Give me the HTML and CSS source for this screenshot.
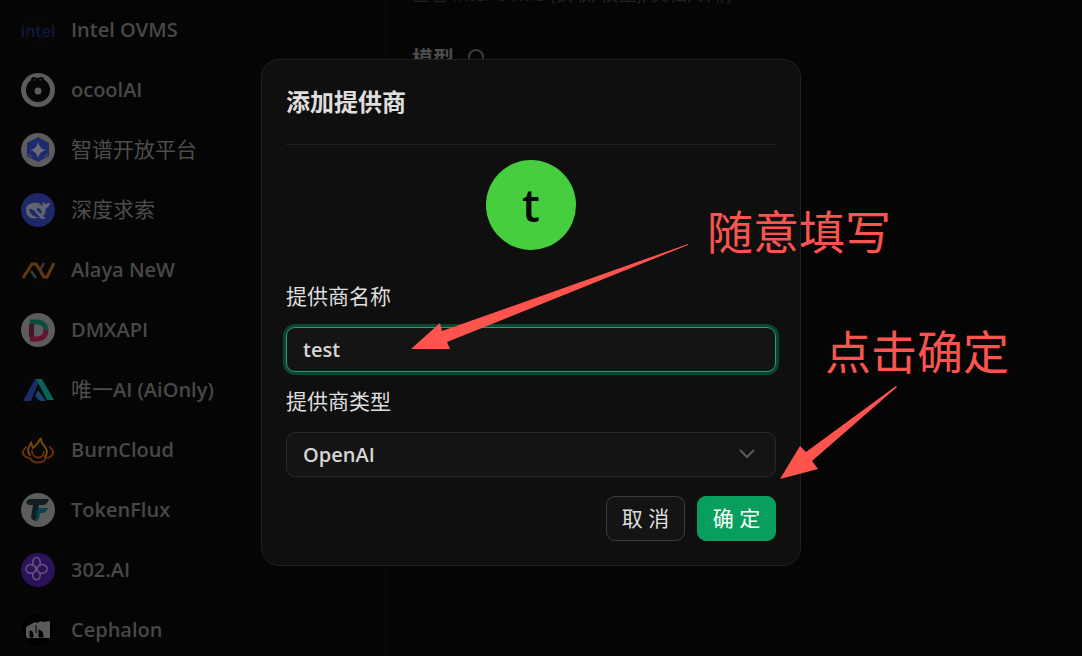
FILE: index.html
```html
<!DOCTYPE html>
<html lang="zh-CN">
<head>
    <meta charset="UTF-8">
    <meta name="viewport" content="width=device-width, initial-scale=1.0">
    <title>添加提供商</title>
    <link rel="stylesheet" href="styles.css">
</head>
<body>
    <div class="page">
        <ul class="providers">
            <li>
                <svg class="logo" viewBox="0 0 36 36"><circle cx="18" cy="18" r="17.5" fill="#060606" stroke="#0a0a0a"/><text class="intel" x="18" y="25" text-anchor="middle">intel</text></svg>
                <b>Intel OVMS</b>
            </li>
            <li>
                <svg class="logo" viewBox="0 0 36 36"><circle cx="18" cy="18" r="17" fill="#5c5c5c"/><circle cx="18" cy="18" r="12" fill="#060606"/><circle cx="14" cy="8" r="3" fill="#060606"/><circle cx="21" cy="8" r="3" fill="#060606"/><circle cx="14.5" cy="8" r="1" fill="#333"/><circle cx="20.5" cy="8" r="1" fill="#333"/><circle cx="18" cy="19" r="3.5" fill="#5c5c5c"/></svg>
                <b>ocoolAI</b>
            </li>
            <li>
                <svg class="logo" viewBox="0 0 36 36"><circle cx="18" cy="18" r="17" fill="#5c5c5c"/><path d="M18 5l11 6v13L18 30 7 24V11z" fill="#1f2b6c"/><path d="M18 10q1.500 7 8 8-6.500 1.500-8 8-1.500-6.500-8-8 6.500-1 8-8z" fill="#6a6c78"/><path d="M8 22l4 3M28 22l-4 3" stroke="#5c5c5c"/></svg>
                <span>智谱开放平台</span>
            </li>
            <li>
                <svg class="logo" viewBox="0 0 36 36"><circle cx="18" cy="18" r="17" fill="#1e2869"/><path d="M6 18c0-6 6-8 12-7 2 0 3 2 4.500 3.500.5-2-.5-3 .5-5 1 2 2 2.500 3.500 2.500 1-1 2-1.500 3.500-1-.5 3-2 4.500-4 5 0 4-1.500 6.500-3 8l2.500 2.500c-3 1-5 0-7-1.500C12 29 6 24 6 18z" fill="#62646e"/><path d="M9 17c5-1 8 6 11 8-6 1-10-3-11-8z" fill="#1e2869"/><path d="M17 16c3 0 5 3 5 5.500-2 0-3-2-5-3z" fill="#1e2869"/></svg>
                <span>深度求索</span>
            </li>
            <li>
                <svg class="logo" viewBox="0 0 36 36"><circle cx="18" cy="18" r="17.5" fill="#060606" stroke="#0a0a0a"/><path d="M3 26 12 12h4l8 13h3l7-14" fill="none" stroke="#65380c" stroke-width="3"/><path d="M11 19l5 7M20 18l4-7" stroke="#3c3c3c" stroke-width="2.5"/></svg>
                <b>Alaya NeW</b>
            </li>
            <li>
                <svg class="logo" viewBox="0 0 36 36"><circle cx="18" cy="18" r="17" fill="#5c5c5c"/><path d="M10 10h7c6 0 9 4 9 8" fill="none" stroke="#0a4c40" stroke-width="5"/><path d="M26 18c0 5-3 9-9 9h-7" fill="none" stroke="#651232" stroke-width="5"/><path d="M11.500 12v13" stroke="#42152c" stroke-width="5"/></svg>
                <b>DMXAPI</b>
            </li>
            <li>
                <svg class="logo" viewBox="0 0 36 36"><circle cx="18" cy="18" r="17.5" fill="#060606" stroke="#0a0a0a"/><path d="M15 7h5l-9 22H3z" fill="#192c69"/><path d="M16 7h6l12 21h-7z" fill="#08645b"/><path d="M18 18l8 11h-6l-5-5z" fill="#174473"/></svg>
                <span>唯一<b>AI (AiOnly)</b></span>
            </li>
            <li>
                <svg class="logo" viewBox="0 0 36 36"><circle cx="18" cy="18" r="17.5" fill="#060606" stroke="#0a0a0a"/><g fill="none" stroke-width="2" stroke-linecap="round"><path d="M10 23c-4-5-1-8 1-12l2 5c4-3 6-6 8-10-1 6 6 9 6 14 0 2-1 3-2 5" stroke="#704a0b"/><path d="M3 19c-1 4 3 7 7 7 3 6 13 6 16 0 5 0 8-4 7-7l-3-4M3 19l3-4" stroke="#682b0b"/><path d="M12 19c0 8 11 9 12 1" stroke="#682b0b"/></g></svg>
                <b>BurnCloud</b>
            </li>
            <li>
                <svg class="logo" viewBox="0 0 36 36"><circle cx="18" cy="18" r="17" fill="#5c5c5c"/><path d="M6 11q1-4 5-4h18q-2 6-6 6h-4l-2 16q-5 0-6-4l2-12H9z" fill="#111d20"/><path d="M18 16h10q-2 5-5 5h-3l-1 6q-1 2-4 2z" fill="#0b4250"/></svg>
                <b>TokenFlux</b>
            </li>
            <li>
                <svg class="logo" viewBox="0 0 36 36"><circle cx="18" cy="18" r="17" fill="#2c125a"/><path d="M13 13c-2-10 9-10 7 0 9-3 10 10 0 8 2 9-9 9-7 0-10 2-9-11 0-8zM13 13c4 2 4 6 0 8M20 13c-4 2-4 6 0 8" fill="none" stroke="#68557e" stroke-width="1.500"/></svg>
                <b>302.AI</b>
            </li>
            <li>
                <svg class="logo" viewBox="0 0 36 36"><circle cx="18" cy="18" r="16" fill="#010101"/><path d="M6 15l9-5 2 1 4-2 2 1 7-1v17H7l-1-2z" fill="#5a5a5a"/><path d="M10 25v-6q3-1 3 6zM19 25v-7q4 0 4 7zM16 13v8" fill="#010101" stroke="#010101"/></svg>
                <b>Cephalon</b>
            </li>
        </ul>
        <main class="settings">
            <div class="help"><p>查看 Intel OVMS (获取, 模型), 文档, 详情</p></div>
            <h2>模型 <svg viewBox="0 0 20 20" width="20" height="20"><path d="M16 16l3 3" stroke="#3c3c3c" stroke-width="2"/><circle cx="9" cy="9" r="7" fill="none" stroke="#3c3c3c" stroke-width="2"/></svg></h2>
        </main>
    </div>

    <div class="modal-wrap">
        <form class="modal" role="dialog" aria-labelledby="modal-title">
            <h1 id="modal-title">添加提供商</h1>
            <div class="avatar">t</div>
            <label for="name">提供商名称</label>
            <input id="name" type="text" value="test">
            <label for="type">提供商类型</label>
            <div class="select-box">
                <select id="type">
                    <option>OpenAI</option>
                </select>
                <svg class="chevron" viewBox="0 0 16 16"><path d="M1 4l7 7 7-7" fill="none" stroke="#5a5a5a" stroke-width="2"/></svg>
            </div>
            <div class="actions">
                <button type="button">取 消</button>
                <button type="button" class="primary">确 定</button>
            </div>

            <!-- note e frecce sopra la finestra -->
            <svg class="arrow arrow-name" viewBox="0 0 278 106"><path d="M0 105L29 79l2 8L277 0v1L36 98l3 7z"/></svg>
            <span class="note note-name">随意填写</span>
            <svg class="arrow arrow-ok" viewBox="0 0 118 94"><path d="M0 93L20 60l6 6L116 0l1 1L32 75l6 8z"/></svg>
            <span class="note note-ok">点击确定</span>
        </form>
    </div>
</body>
</html>
```

FILE: styles.css
```css
* {
    box-sizing: border-box;
}

body {
    font-family: "Open Sans", "Noto Sans CJK SC", sans-serif;
    font-size: 21px;
    background-color: #050505;
    color: #dedede;
    margin: 0;
    height: 100vh;
    overflow: hidden;
}

.page {
    display: flex;
    height: 100%;
    color: #4c4c4c;
}

.providers {
    list-style-type: none;
    margin: 0;
    padding: 0 20px;
    width: 386px;
    flex-shrink: 0;
    border-right: 1px solid #0c0c0c;
}

.providers li {
    display: flex;
    align-items: center;
    gap: 15px;
    height: 60px;
    line-height: 30px;
}

.providers span {
    padding-bottom: 2px;
}

.providers b {
    font-size: 20px;
    font-weight: 600;
    color: #484848;
}

.logo {
    width: 36px;
    height: 36px;
}

.intel {
    font-size: 16px;
    font-weight: 600;
    fill: #10183d;
}

.settings {
    flex: 1;
    padding: 0 26px;
}

.help {
    display: flex;
    align-items: flex-end;
    height: 4px;
    overflow: hidden;
    color: #222;
    font-size: 18px;
}

.help p {
    margin: 0;
    line-height: 20px;
    white-space: nowrap;
}

.settings h2 {
    display: flex;
    align-items: center;
    gap: 13px;
    margin: 39px 0 0;
    font-size: 21px;
    line-height: 30px;
}

.modal-wrap {
    position: absolute;
    inset: 0;
    display: flex;
    justify-content: center;
    align-items: flex-start;
    padding: 59px 20px 0 0;
}

.modal {
    position: relative;
    display: flex;
    flex-direction: column;
    width: 540px;
    padding: 24px;
    background-color: #0f0f0f;
    border: 1px solid #202020;
    border-radius: 18px;
}

.modal h1 {
    margin: 0 0 15px;
    padding-bottom: 24px;
    border-bottom: 1px solid #202020;
    font-size: 24px;
    line-height: 36px;
}

.avatar {
    align-self: center;
    width: 90px;
    height: 90px;
    margin-bottom: 30px;
    border-radius: 50%;
    background-color: #47ce3e;
    color: #080808;
    font-size: 45px;
    font-weight: 600;
    line-height: 90px;
    text-align: center;
}

label {
    line-height: 33px;
    margin-bottom: 14px;
}

input,
select {
    width: 100%;
    height: 45px;
    padding: 0 16px;
    background-color: #141414;
    color: #d4d4d4;
    border: 1px solid #292929;
    border-radius: 9px;
    font: inherit;
    font-size: 20px;
    font-weight: 600;
    appearance: none;
    outline: none;
}

input {
    margin-bottom: 13px;
    border-color: #2b9b70;
    box-shadow: 0 0 0 3px #07462f;
}

.select-box {
    position: relative;
    height: 45px;
}

.chevron {
    position: absolute;
    top: 14px;
    right: 21px;
    width: 16px;
    height: 16px;
    pointer-events: none;
}

.actions {
    display: flex;
    justify-content: flex-end;
    gap: 12px;
    margin-top: 19px;
}

button {
    height: 45px;
    width: 79px;
    padding: 0 0 4px;
    background-color: #141414;
    color: #dedede;
    border: 1px solid #3c3c3c;
    border-radius: 9px;
    font: inherit;
    cursor: pointer;
}

.primary {
    background-color: #089f5e;
    border-color: #089f5e;
    color: white;
}

.arrow {
    position: absolute;
    fill: #ff534d;
    pointer-events: none;
}

.arrow-name {
    left: 149px;
    top: 184px;
    width: 278px;
    height: 106px;
}

.arrow-ok {
    left: 518px;
    top: 326px;
    width: 118px;
    height: 94px;
}

.note {
    position: absolute;
    color: #f9544f;
    font-size: 46px;
    line-height: 60px;
    white-space: nowrap;
}

.note-name {
    left: 445px;
    top: 141px;
}

.note-ok {
    left: 563px;
    top: 261px;
}
```
